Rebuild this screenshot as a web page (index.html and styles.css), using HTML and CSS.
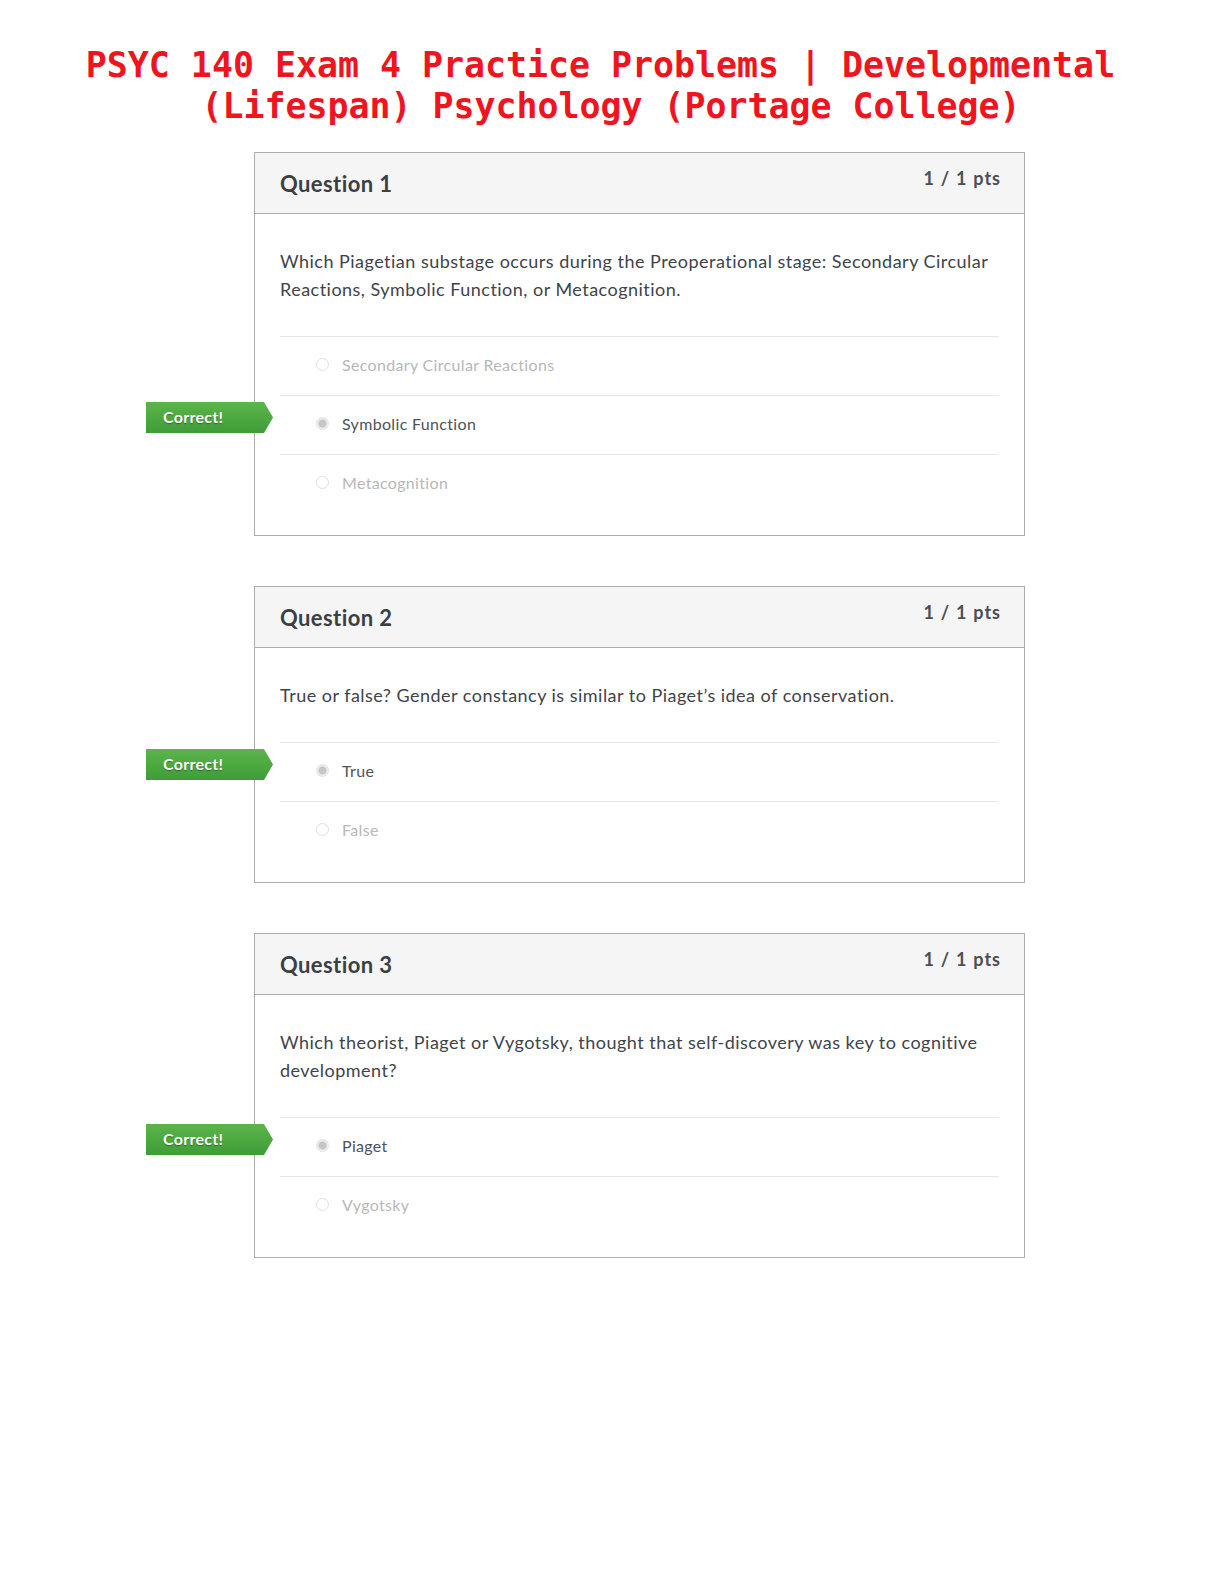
FILE: index.html
```html
<!DOCTYPE html>
<html lang="en">
<head>
<meta charset="utf-8">
<title>PSYC 140 Exam 4 Practice Problems</title>
<link rel="stylesheet" href="styles.css">
</head>
<body>
<h1 class="doc-title">PSYC 140 Exam 4 Practice Problems | Developmental (Lifespan) Psychology (Portage College)</h1>

<main class="quiz">
  <section class="question">
    <header class="q-header">
      <h2 class="q-name">Question 1</h2>
      <span class="q-pts">1 / 1 pts</span>
    </header>
    <div class="q-body">
      <p class="q-text">Which Piagetian substage occurs during the Preoperational stage: Secondary Circular Reactions, Symbolic Function, or Metacognition.</p>
      <ul class="answers">
        <li class="answer"><span class="radio"></span><span class="a-text">Secondary Circular Reactions</span></li>
        <li class="answer selected"><span class="badge">Correct!</span><span class="radio"></span><span class="a-text">Symbolic Function</span></li>
        <li class="answer"><span class="radio"></span><span class="a-text">Metacognition</span></li>
      </ul>
    </div>
  </section>

  <section class="question">
    <header class="q-header">
      <h2 class="q-name">Question 2</h2>
      <span class="q-pts">1 / 1 pts</span>
    </header>
    <div class="q-body">
      <p class="q-text">True or false? Gender constancy is similar to Piaget’s idea of conservation.</p>
      <ul class="answers">
        <li class="answer selected"><span class="badge">Correct!</span><span class="radio"></span><span class="a-text">True</span></li>
        <li class="answer"><span class="radio"></span><span class="a-text">False</span></li>
      </ul>
    </div>
  </section>

  <section class="question">
    <header class="q-header">
      <h2 class="q-name">Question 3</h2>
      <span class="q-pts">1 / 1 pts</span>
    </header>
    <div class="q-body">
      <p class="q-text">Which theorist, Piaget or Vygotsky, thought that self-discovery was key to cognitive development?</p>
      <ul class="answers">
        <li class="answer selected"><span class="badge">Correct!</span><span class="radio"></span><span class="a-text">Piaget</span></li>
        <li class="answer"><span class="radio"></span><span class="a-text">Vygotsky</span></li>
      </ul>
    </div>
  </section>
</main>
</body>
</html>
```

FILE: styles.css
```css
html, body {
  margin: 0;
  padding: 0;
  background: #ffffff;
}

body {
  font-family: Lato, "Open Sans", "Liberation Sans", sans-serif;
  color: #3b3f45;
}

.doc-title {
  margin: 0;
  padding: 45px 2px 0 0;
  font-family: "DejaVu Sans Mono", "Liberation Mono", monospace;
  font-weight: bold;
  font-size: 34.9px;
  line-height: 41px;
  color: #f0141e;
  text-align: center;
  text-indent: -21px;
}

.quiz {
  width: 771px;
  margin: 25px 0 0 254px;
}

.question {
  border: 1px solid #acacac;
  margin-bottom: 50px;
  background: #fff;
}

.q-header {
  display: flex;
  justify-content: space-between;
  align-items: flex-start;
  padding: 14px 25px 16px 25px;
  background: #f5f5f5;
  border-bottom: 1px solid #acacac;
}

.q-name {
  margin: 4px 0 0 0;
  font-size: 22px;
  line-height: 26px;
  font-weight: bold;
  letter-spacing: 0.4px;
  color: #3a3f44;
}

.q-pts {
  margin-right: -2px;
  font-size: 18px;
  line-height: 22px;
  font-weight: bold;
  letter-spacing: 1px;
  word-spacing: 0.5px;
  color: #4b4f54;
}

.q-body {
  padding: 33px 25px 22px 25px;
}

.q-text {
  margin: 0 0 33px 0;
  font-size: 18px;
  line-height: 28px;
  letter-spacing: 0.48px;
  color: #40444a;
}

.answers {
  list-style: none;
  margin: 0;
  padding: 0;
}

.answer {
  position: relative;
  display: flex;
  align-items: center;
  gap: 13px;
  height: 59px;
  padding: 0 0 3px 36px;
  box-sizing: border-box;
  border-top: 1px solid #e6e6e6;
  font-size: 16px;
  line-height: 20px;
  letter-spacing: 0.33px;
  color: #b8b8b8;
}

.radio {
  flex: none;
  width: 13px;
  height: 13px;
  border-radius: 50%;
  box-sizing: border-box;
  border: 1px solid #e0e0e0;
  background: #fff;
}

.selected .radio {
  border-color: #e4e4e4;
  background: radial-gradient(circle, #c6c6c6 0 3.5px, #ececec 4.5px);
}

.selected .a-text {
  color: #4e5358;
}

.badge {
  position: absolute;
  left: -134px;
  top: 6px;
  width: 127px;
  height: 31px;
  box-sizing: border-box;
  padding-left: 17px;
  font-size: 16px;
  line-height: 29px;
  font-weight: bold;
  letter-spacing: 0.3px;
  color: #fff;
  text-shadow: 0 1px 1px rgba(0, 0, 0, 0.35);
  background: linear-gradient(#5cb54b, #3f9c37);
  clip-path: polygon(0 0, 118px 0, 127px 50%, 118px 100%, 0 100%);
}
```
